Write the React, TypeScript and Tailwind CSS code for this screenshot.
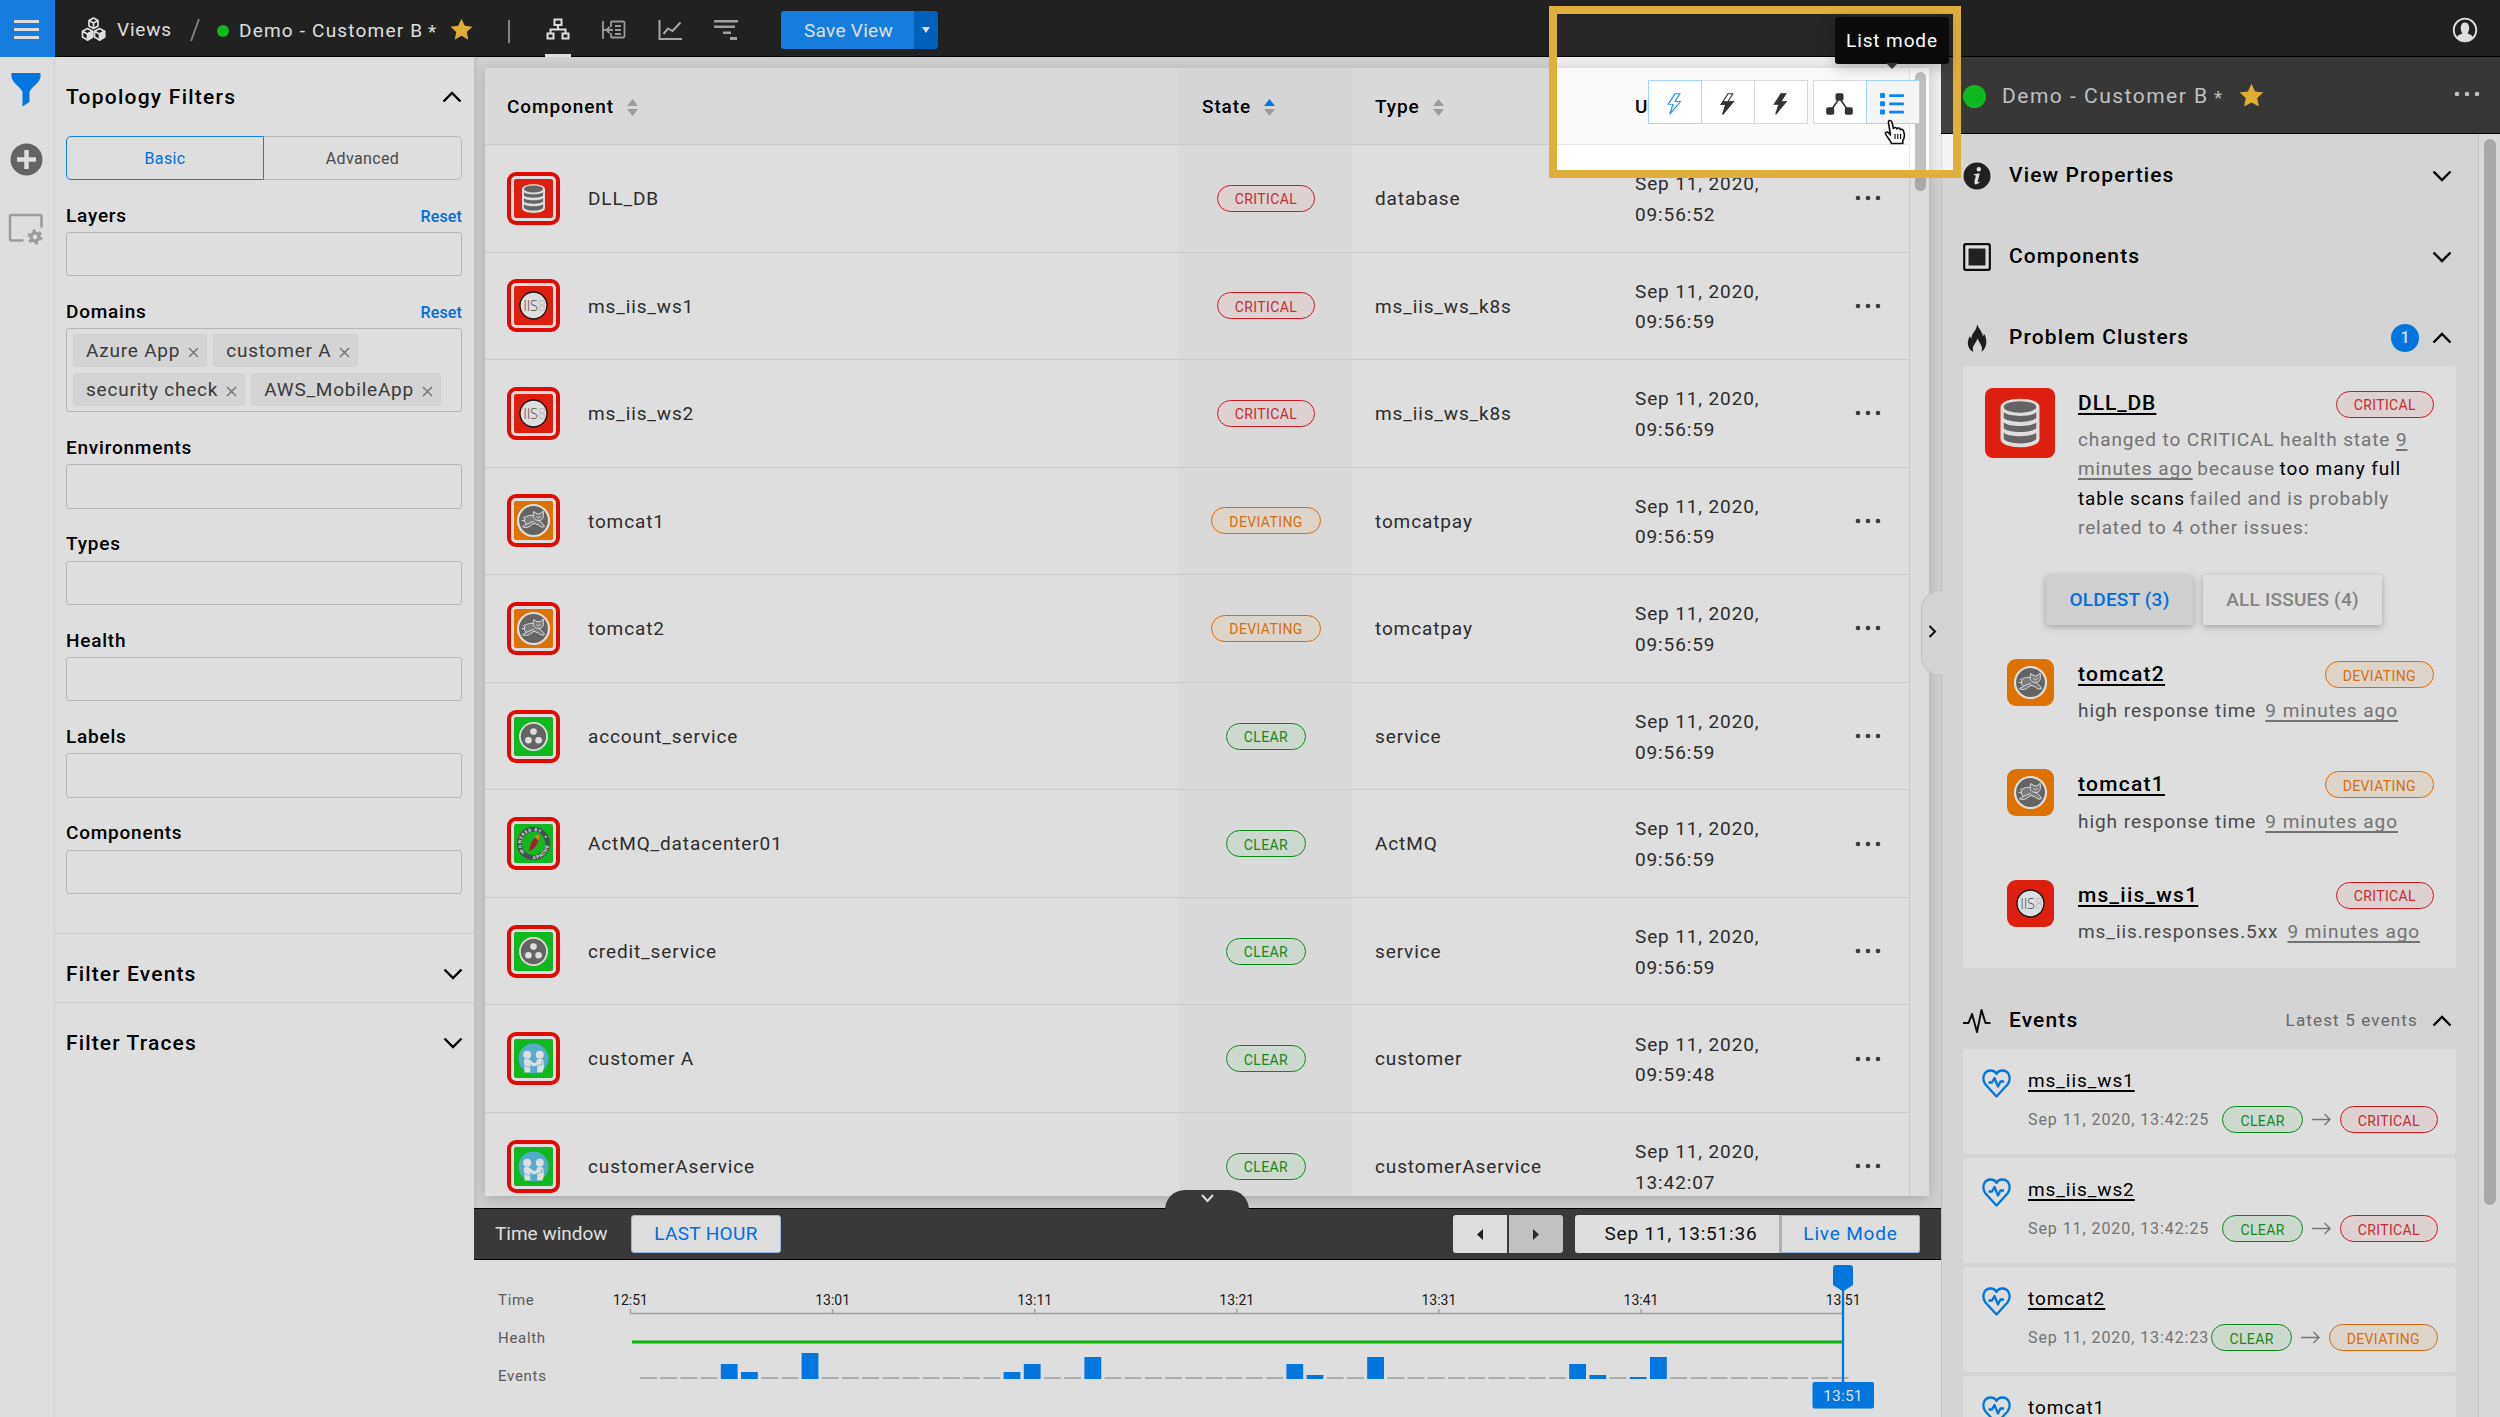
import type { ReactNode } from "react";

type Health = "CRITICAL" | "DEVIATING" | "CLEAR";
type Glyph = "db" | "iis" | "tomcat" | "service" | "apache" | "customer";

const tileColor: Record<Health, string> = {
  CRITICAL: "bg-[#ff2412]",
  DEVIATING: "bg-[#ff8400]",
  CLEAR: "bg-[#12d424]",
};

const pillColor: Record<Health, string> = {
  CRITICAL: "border-[#ee1a28] text-[#e0343c] bg-[#fff0f0]",
  DEVIATING: "border-[#f57c10] text-[#f58010] bg-[#fff5e8]",
  CLEAR: "border-[#0c9c1e] text-[#189c26] bg-[#ecf9ed]",
};

function Pill({ s }: { s: Health }) {
  return (
    <span
      className={`inline-flex h-[27px] shrink-0 items-center rounded-full border-[1.5px] px-[17px] pt-[2px] text-[14px] leading-none tracking-[0.027em] ${pillColor[s]}`}
    >
      {s}
    </span>
  );
}

function GlyphSvg({ g, size }: { g: Glyph; size: number }) {
  return (
    <svg width={size} height={size} viewBox="0 0 39 39" className="block">
      {g === "db" && (
        <g>
          <path d="M8 10C8 3.5 31 3.5 31 10V29C31 35.5 8 35.5 8 29Z" fill="#fff" />
          <ellipse cx="19.5" cy="10" rx="9.6" ry="3.4" fill="#737373" />
          <path d="M9.9 13.2C13 16 26 16 29.100 13.2V16.600C26 19.600 13 19.600 9.900 16.600Z" fill="#737373" />
          <path d="M9.9 19.2C13 22 26 22 29.100 19.2V22.600C26 25.600 13 25.600 9.900 22.600Z" fill="#737373" />
          <path d="M9.9 25.2C13 28 26 28 29.100 25.2V29C26 32.400 13 32.400 9.900 29Z" fill="#737373" />
        </g>
      )}
      {g === "iis" && (
        <g>
          <circle cx="19.500" cy="19.500" r="13.500" fill="#fff" stroke="#151515" strokeWidth="1.300" />
          <text x="9.300" y="24.700" fontFamily="Open Sans" fontWeight="300" fontSize="14.500" letterSpacing="-0.300" fill="#555">
            IIS<tspan fill="#d4d4d4">8</tspan>
          </text>
        </g>
      )}
      {g === "tomcat" && (
        <g strokeLinecap="round" strokeLinejoin="round">
          <circle cx="19.500" cy="19.500" r="15.500" fill="#737373" stroke="#fff" strokeWidth="2.200" />
          <path
            d="M10.500 18.500C11 15.500 14 14 19 14.500L19.800 10.500L23 12.800H26L29.300 10.200V15.500C29 18 27.500 19.500 25 19.500C27 21 29.500 23 30.500 25.500C28.500 26.800 26.500 26 24.500 24L20 22.200L15.500 25.500C13 27 9.500 26.800 8.500 25.500C10 24.500 11.500 24.300 12.500 23.300C10.500 22 10 20.500 10.500 18.500Z"
            fill="#8e8e8e"
            stroke="#fff"
            strokeWidth="1"
          />
          <path d="M19 14.500C19.500 18 21.500 19.500 25 19.500M12.500 23.300C15 22.500 16.500 21 19.500 20.500M22.800 15.500L24.300 17.200L26.500 15.300M9 17L11 15.500M8 19.500H10" fill="none" stroke="#fff" strokeWidth="0.900" />
        </g>
      )}
      {g === "service" && (
        <g>
          <circle cx="19.500" cy="19.500" r="13.600" fill="#737373" stroke="#fff" strokeWidth="1.800" />
          <circle cx="19.500" cy="14.600" r="3.300" fill="#fff" />
          <circle cx="14.400" cy="23.200" r="3.300" fill="#fff" />
          <circle cx="24.600" cy="23.200" r="3.300" fill="#fff" />
        </g>
      )}
      {g === "apache" && (
        <g>
          <circle cx="19.500" cy="19.500" r="14.200" fill="none" stroke="#565a5c" strokeWidth="5" />
          <path id="arcTop" d="M10.730 28.270A12.400 12.400 0 0 1 28.270 10.730" fill="none" />
          <path id="arcLow" d="M8.330 30.670A15.800 15.800 0 0 0 30.670 8.330" fill="none" />
          <text fontFamily="Roboto" fontWeight="700" fontSize="4.300" fill="#fff" textAnchor="middle">
            <textPath href="#arcTop" startOffset="50%">
              POWERED BY
            </textPath>
          </text>
          <text fontFamily="Roboto" fontWeight="700" fontSize="4.800" fill="#fff" textAnchor="middle">
            <textPath href="#arcLow" startOffset="48%">
              APACHE
            </textPath>
          </text>
          <circle cx="31.800" cy="12.800" r="1" fill="#fff" />
          <circle cx="8.700" cy="28.500" r="1" fill="#fff" />
          <path d="M15 27.500C15.500 23 17.500 17.500 20.500 13.200L24.500 16C23.500 20.500 20 25 15 27.500Z" fill="#c41e3a" />
          <path d="M20.500 13.200C21.500 11.700 23.500 10.300 25 10.300C25.500 12.500 25.200 14.300 24.500 16Z" fill="#f69923" />
        </g>
      )}
      {g === "customer" && (
        <g>
          <circle cx="19.500" cy="19.500" r="15" fill="#63c4ea" />
          <circle cx="13.200" cy="15.800" r="4" fill="#fff" />
          <circle cx="25.800" cy="15.800" r="4" fill="#fff" />
          <path d="M9.700 21C11 19.800 15 19.800 16.200 21L20 24.300L22.600 23V21C24 19.800 28 19.800 29.300 21L30 28.500L28.500 33.500H23.200V26.200L19.500 27.400L16.300 25.600V33.500H10.500V27Z" fill="#fff" />
          <path d="M10.800 26.500L16.300 29M23.200 26.500L27.800 25.500V22" fill="none" stroke="#63c4ea" strokeWidth="0.700" />
        </g>
      )}
    </svg>
  );
}

function RingIcon({ g, s }: { g: Glyph; s: Health }) {
  return (
    <div className="flex size-[53px] shrink-0 items-center justify-center rounded-[9px] border-[4px] border-[#ff0e04] bg-white">
      <div className={`size-[39px] overflow-hidden rounded-[2px] ${tileColor[s]}`}>
        <GlyphSvg g={g} size={39} />
      </div>
    </div>
  );
}

function Star({ size }: { size: number }) {
  return (
    <svg width={size} height={size} viewBox="0 0 24 24" fill="#ffc73f" className="block">
      <path d="M12 .8L15.400 8.100L23.400 9.100L17.500 14.500L19.100 22.600L12 18.600L4.900 22.600L6.500 14.500L.6 9.100L8.600 8.100Z" />
    </svg>
  );
}

function Chevron({ up, color = "#000" }: { up?: boolean; color?: string }) {
  return (
    <svg width="20" height="14" viewBox="0 0 20 14" fill="none" stroke={color} strokeWidth="2.400" className="block">
      <path d={up ? "M1.500 11.500L10 3L18.500 11.500" : "M1.500 2.500L10 11L18.500 2.500"} />
    </svg>
  );
}

function Dots({ color = "#444" }: { color?: string }) {
  return (
    <svg width="26" height="6" viewBox="0 0 26 6" fill={color} className="block">
      <circle cx="3" cy="3" r="2.300" />
      <circle cx="13" cy="3" r="2.300" />
      <circle cx="23" cy="3" r="2.300" />
    </svg>
  );
}

function Sort({ asc }: { asc?: boolean }) {
  return (
    <svg width="11" height="17" viewBox="0 0 11 17" className="ml-[13px] mt-[1px] block">
      <path d="M5.500 0L11 7H0Z" fill={asc ? "#0a84ff" : "#b4b4b4"} />
      <path d="M5.500 17L11 10H0Z" fill="#b4b4b4" />
    </svg>
  );
}

function TopBar() {
  return (
    <header className="flex h-[57px] shrink-0 items-center border-b border-black bg-[#262626] text-[19px] text-white">
      <div className="flex h-[57px] w-[55px] flex-col items-center justify-center gap-[5px] bg-[#1890ff] pr-[2px] pt-[2px]">
        <div className="h-[3px] w-[25px] bg-white" />
        <div className="h-[3px] w-[25px] bg-white" />
        <div className="h-[3px] w-[25px] bg-white" />
      </div>
      <svg width="25" height="24" viewBox="0 0 25 24" className="ml-[26px] mt-[1px] block" fill="#262626" stroke="#fff" strokeWidth="1.700" strokeLinejoin="round">
        <path d="M12.500 1L17 3.500V9L12.500 11.500L8 9V3.500ZM8 3.500L12.500 6L17 3.500M12.500 6V11.500" />
        <path d="M6.500 11.500L11.500 14.200V20L6.500 23L1.500 20V14.200ZM1.500 14.200L6.500 17L11.500 14.200" />
        <path d="M6.500 17L11.500 14.200V20L6.500 23Z" fill="#fff" />
        <path d="M18.500 11.500L23.500 14.200V20L18.500 23L13.500 20V14.200ZM13.500 14.200L18.500 17L23.500 14.200" />
        <path d="M18.500 17L23.500 14.200V20L18.500 23Z" fill="#fff" />
      </svg>
      <span className="ml-[11px] mt-[4px] w-[56px] tracking-[0.042em]">Views</span>
      <svg width="10" height="22" viewBox="0 0 10 22" className="ml-[17px] mt-[4px] block" stroke="#999" strokeWidth="1.800">
        <path d="M9 0L1 22" />
      </svg>
      <div className="ml-[17px] mt-[5px] size-[12px] rounded-full bg-[#12d424]" />
      <span className="ml-[10px] mt-[7px] w-[189px] whitespace-nowrap tracking-[0.063em]">Demo - Customer B</span>
      <span className="mt-[9px] w-[10px]">*</span>
      <div className="ml-[12px] mt-[3px]">
        <Star size={23} />
      </div>
      <div className="ml-[35px] mt-[6px] h-[23px] w-[2px] bg-[#999]" />
      <div className="relative ml-[35px] flex h-[57px] w-[25px] items-center justify-center">
        <svg width="24" height="22" viewBox="0 0 24 22" fill="none" stroke="#fff" strokeWidth="2" className="mt-[2px] block">
          <path d="M8.500 1.500H15.500V7H8.500ZM1.500 15.500H7.500V20.500H1.500ZM16.500 15.500H22.500V20.500H16.500ZM12 7V11.500M4.500 15.500V11.500H19.500V15.500" />
        </svg>
        <div className="absolute bottom-0 left-0 h-[3px] w-[26px] bg-white" />
      </div>
      <svg width="24" height="20" viewBox="0 0 24 20" fill="none" stroke="#b0b0b0" strokeWidth="1.800" className="ml-[32px] mt-[3px] block">
        <path d="M9 7V2Q9 1.500 9.500 1.500H21.500Q22.500 1.500 22.500 2.500V16Q22.500 17.500 21.500 17.500H9.500Q9 17.500 9 16.500V13M1 1V19M1 10H11M7.500 7L4.500 10L7.500 13M13 6H19M13 10H19M13 14H19" />
      </svg>
      <svg width="25" height="22" viewBox="0 0 25 22" fill="none" stroke="#c0c0c0" strokeWidth="2" className="ml-[32px] mt-[3px] block">
        <path d="M1.500 1V20H24M5.500 15L10 9.500L14.500 12L22.500 3.500" />
      </svg>
      <svg width="24" height="22" viewBox="0 0 24 22" fill="#b8b8b8" className="ml-[31px] mt-[3px] block">
        <path d="M0 1H24V3.500H0ZM0 6.500H21V9H0ZM9 12.500H17V15H9ZM16 18H23V21H16Z" />
      </svg>
      <div className="ml-[43px] mt-[4px] flex h-[38px] w-[157px] overflow-hidden rounded-[3px]">
        <div className="flex w-[133px] items-center justify-center bg-[#1890ff] pl-[2px] pt-[2px] tracking-[0.016em]">Save View</div>
        <div className="flex w-[24px] items-center justify-center bg-[#0070d8]">
          <svg width="8" height="6" viewBox="0 0 8 6" fill="#fff">
            <path d="M0 0H8L4 6Z" />
          </svg>
        </div>
      </div>
      <svg width="26" height="26" viewBox="0 0 26 26" className="ml-auto mr-[22px] mt-[3px] block">
        <circle cx="13" cy="13" r="11.300" fill="#262626" stroke="#fff" strokeWidth="1.800" />
        <path d="M5 20.500C6 17.500 9 17.200 10.500 16.500C8 14 7.800 5.500 13 5.500C18.200 5.500 18 14 15.500 16.500C17 17.200 20 17.500 21 20.500C17 25.200 9 25.200 5 20.500Z" fill="#fff" />
      </svg>
    </header>
  );
}

function IconRail() {
  return (
    <div className="flex w-[55px] shrink-0 flex-col items-center border-r border-[#efefef] bg-white pr-[2px] pt-[16px]">
      <svg width="30" height="34" viewBox="0 0 30 34" fill="#0088ff" className="block">
        <path d="M.5 0H29.500V4.500C27 12 21 13 18.500 19V29L11.500 33.500V19C9 13 3 12 .5 4.500Z" />
      </svg>
      <svg width="33" height="33" viewBox="0 0 33 33" className="mt-[36px] block">
        <circle cx="16.500" cy="16.500" r="16" fill="#737373" />
        <path d="M16.500 7V26M7 16.500H26" stroke="#fff" strokeWidth="4.500" />
      </svg>
      <svg width="36" height="32" viewBox="0 0 36 32" className="mt-[37px] block" fill="none" stroke="#b4b4b4">
        <path d="M15.500 27.500H4Q2 27.500 2 25.500V4Q2 2 4 2H31.500Q33.500 2 33.500 4V14.500" strokeWidth="2.600" />
        <circle cx="27" cy="24" r="4" strokeWidth="3.200" />
        <circle cx="27" cy="24" r="6.300" strokeWidth="2.400" strokeDasharray="3.300 3.300" />
      </svg>
    </div>
  );
}

function Tag({ children }: { children: ReactNode }) {
  return (
    <div className="flex h-[33px] items-center rounded-[3px] border border-[#efefef] bg-[#f4f4f4] pl-[12px] pr-[7px] pt-[1px] text-[19px] tracking-[0.041em] text-[#444]">
      {children}
      <svg width="11" height="11" viewBox="0 0 11 11" stroke="#808080" strokeWidth="1.400" className="ml-[8px] mt-[2px] block">
        <path d="M1 1L10 10M10 1L1 10" />
      </svg>
    </div>
  );
}

function Field({ label, reset, children }: { label: string; reset?: boolean; children?: ReactNode }) {
  return (
    <div className="mb-[20px]">
      <div className="flex h-[32px] items-center justify-between">
        <span className="text-[19px] font-medium tracking-[0.041em]">{label}</span>
        {reset && <span className="mt-[2px] text-[16px] font-medium tracking-[0.008em] text-[#0080ff]">Reset</span>}
      </div>
      <div className="flex min-h-[44.350px] flex-wrap gap-[6px] rounded-[3px] border-[1.500px] border-[#d2d2d2] py-[5px] pl-[6px]">{children}</div>
    </div>
  );
}

function FilterPanel() {
  return (
    <aside className="flex w-[419px] shrink-0 flex-col bg-white">
      <div className="pl-[11px] pr-[12px] pt-[14px]">
        <div className="flex h-[52px] items-center justify-between">
          <span className="pt-[2px] text-[21px] font-medium tracking-[0.059em]">Topology Filters</span>
          <Chevron up />
        </div>
        <div className="mt-[13px] grid h-[44px] grid-cols-2 text-[16px] tracking-[0.022em]">
          <div className="flex items-center justify-center rounded-l-[5px] border-[1.500px] border-[#1890ff] pt-[2px] text-[#0080ff]">Basic</div>
          <div className="flex items-center justify-center rounded-r-[5px] border-[1.500px] border-l-0 border-[#d4d4d4] pt-[2px] text-[#555]">Advanced</div>
        </div>
        <div className="mt-[20px]">
          <Field label="Layers" reset />
          <Field label="Domains" reset>
            <Tag>Azure App</Tag>
            <Tag>customer A</Tag>
            <Tag>security check</Tag>
            <Tag>AWS_MobileApp</Tag>
          </Field>
          <Field label="Environments" />
          <Field label="Types" />
          <Field label="Health" />
          <Field label="Labels" />
          <Field label="Components" />
        </div>
      </div>
      <div className="mt-[19px] flex h-[69px] items-center justify-between border-t border-[#ececec] px-[11px] pt-[12px] text-[21px] font-medium tracking-[0.054em]">
        <span className="pt-[2px]">Filter Events</span>
        <Chevron />
      </div>
      <div className="flex h-[69px] items-center justify-between border-t border-[#ececec] px-[11px] pt-[12px] text-[21px] font-medium tracking-[0.054em]">
        <span className="pt-[2px]">Filter Traces</span>
        <Chevron />
      </div>
    </aside>
  );
}

const rows: { g: Glyph; name: string; s: Health; type: string; time: string }[] = [
  { g: "db", name: "DLL_DB", s: "CRITICAL", type: "database", time: "09:56:52" },
  { g: "iis", name: "ms_iis_ws1", s: "CRITICAL", type: "ms_iis_ws_k8s", time: "09:56:59" },
  { g: "iis", name: "ms_iis_ws2", s: "CRITICAL", type: "ms_iis_ws_k8s", time: "09:56:59" },
  { g: "tomcat", name: "tomcat1", s: "DEVIATING", type: "tomcatpay", time: "09:56:59" },
  { g: "tomcat", name: "tomcat2", s: "DEVIATING", type: "tomcatpay", time: "09:56:59" },
  { g: "service", name: "account_service", s: "CLEAR", type: "service", time: "09:56:59" },
  { g: "apache", name: "ActMQ_datacenter01", s: "CLEAR", type: "ActMQ", time: "09:56:59" },
  { g: "service", name: "credit_service", s: "CLEAR", type: "service", time: "09:56:59" },
  { g: "customer", name: "customer A", s: "CLEAR", type: "customer", time: "09:59:48" },
  { g: "customer", name: "customerAservice", s: "CLEAR", type: "customerAservice", time: "13:42:07" },
];

function ComponentTable() {
  return (
    <div className="flex h-[1128px] w-[1444px] overflow-hidden bg-white shadow-[0_3px_14px_rgba(0,0,0,0.2)]">
      <div className="w-[1425px] shrink-0 border-r border-[#e6e6e6]">
        <div className="grid h-[77px] grid-cols-[694px_173px_260px_1fr] border-b border-[#e8e8e8] bg-[#fafafa] text-[19px] font-medium tracking-[0.047em]">
          <div className="flex items-center pl-[22px] pt-[2px]">
            Component
            <Sort />
          </div>
          <div className="flex items-center bg-[#f5f5f5] pl-[23px] pt-[2px]">
            State
            <Sort asc />
          </div>
          <div className="flex items-center pl-[23px] pt-[2px]">
            Type
            <Sort />
          </div>
          <div className="flex items-center pl-[23px] pt-[2px]">U</div>
        </div>
        {rows.map((r) => (
          <div
            key={r.name}
            className="grid h-[107.550px] grid-cols-[694px_173px_260px_1fr] border-b border-[#e8e8e8] text-[19px] tracking-[0.046em] text-[#333]"
          >
            <div className="flex items-center pl-[22px]">
              <RingIcon g={r.g} s={r.s} />
              <span className="ml-[28px] pt-[2px]">{r.name}</span>
            </div>
            <div className="flex items-center justify-center bg-[#fafafa] pl-px">
              <Pill s={r.s} />
            </div>
            <div className="flex items-center pl-[23px] pt-[2px]">{r.type}</div>
            <div className="flex items-center justify-between pl-[23px] pr-[28px]">
              <span className="w-[150px] pt-[3px] leading-[30.600px]">
                Sep 11, 2020,
                <br />
                {r.time}
              </span>
              <Dots />
            </div>
          </div>
        ))}
      </div>
      <div className="flex w-[19px] justify-center bg-[#fcfcfc] pl-[2px] pt-[4px]">
        <div className="h-[119px] w-[11px] rounded-full bg-[#c1c1c1]" />
      </div>
    </div>
  );
}

const bolt = "M8.500 1L2 15.500H6.500L3.500 29L13.500 11.500H8.500L13 1Z";

function ToolButtons() {
  return (
    <div className="absolute left-[1173.500px] top-[23px] flex">
      <div className="flex">
        <div className="z-10 flex h-[44px] w-[54px] items-center justify-center border-[1.500px] border-[#a4d5ff] bg-white pr-[2px] pt-[3px]">
          <svg width="16" height="22" viewBox="0 0 15 30" preserveAspectRatio="none" fill="none" stroke="#2b92ff" strokeWidth="1.300">
            <path d={bolt} />
          </svg>
        </div>
        <div className="-ml-px flex h-[44px] w-[54px] items-center justify-center border-[1.500px] border-[#d9d9d9] bg-white pr-[2px] pt-[3px]">
          <svg width="16" height="22" viewBox="0 0 15 30" preserveAspectRatio="none" stroke="#333" strokeWidth="1.100">
            <path d={bolt} fill="none" />
            <path d="M2 15.500H6.500L3.500 29L13.500 11.500H4Z" fill="#333" />
          </svg>
        </div>
        <div className="-ml-px flex h-[44px] w-[54px] items-center justify-center border-[1.500px] border-[#d9d9d9] bg-white pr-[2px] pt-[3px]">
          <svg width="16" height="22" viewBox="0 0 15 30" preserveAspectRatio="none" stroke="#333" strokeWidth="1.100" fill="#333">
            <path d={bolt} />
          </svg>
        </div>
      </div>
      <div className="ml-[5px] flex">
        <div className="flex h-[44px] w-[54px] items-center justify-center border-[1.500px] border-[#d9d9d9] bg-white pr-px pt-[3px]">
          <svg width="27" height="22" viewBox="0 0 27 22" fill="#333" stroke="#333" strokeWidth="1.600">
            <path d="M13.500 5L5 17.500M13.500 5L22 17.500" />
            <rect x="10.300" y="1" width="6.400" height="6" rx="1" />
            <rect x="1" y="15" width="6.400" height="6" rx="1" />
            <rect x="19.600" y="15" width="6.400" height="6" rx="1" />
          </svg>
        </div>
        <div className="-ml-px flex h-[44px] w-[54px] items-center justify-center border-[1.500px] border-[#a4d5ff] bg-[#f5f5f5] pr-px pt-[3px]">
          <svg width="24" height="22" viewBox="0 0 24 22" fill="#0a84ff">
            <rect x="0" y="0" width="5" height="5" rx="1" />
            <rect x="0" y="8.300" width="5" height="5" rx="1" />
            <rect x="0" y="16.600" width="5" height="5" rx="1" />
            <rect x="9" y="1.200" width="15" height="2.800" rx="1" />
            <rect x="9" y="9.500" width="15" height="2.800" rx="1" />
            <rect x="9" y="17.800" width="15" height="2.800" rx="1" />
          </svg>
        </div>
      </div>
    </div>
  );
}

function TimeBar() {
  return (
    <div className="relative flex h-[52px] shrink-0 items-center border-y border-black bg-[#424242] pl-[21px] pr-[21px] text-[19px] text-white">
      <div className="absolute left-[691px] top-[-19px] flex h-[20px] w-[84px] justify-center rounded-t-[20px] bg-[#424242] pt-[4px]">
        <svg width="13" height="9" viewBox="0 0 13 9" fill="none" stroke="#fff" strokeWidth="2">
          <path d="M1 1L6.500 7L12 1" />
        </svg>
      </div>
      <span className="w-[136px] pt-[1px]">Time window</span>
      <div className="flex h-[38px] w-[150px] items-center justify-center rounded-[3px] border border-[#a8d4ff] bg-white pt-[1px] tracking-[0.018em] text-[#0080ff]">LAST HOUR</div>
      <div className="ml-auto flex gap-[2px]">
        <div className="flex h-[38px] w-[54px] items-center justify-center rounded-l-[3px] bg-white">
          <svg width="6" height="11" viewBox="0 0 6 11" fill="#222">
            <path d="M6 0V11L0 5.500Z" />
          </svg>
        </div>
        <div className="flex h-[38px] w-[54px] items-center justify-center rounded-r-[3px] bg-[#dedede]">
          <svg width="6" height="11" viewBox="0 0 6 11" fill="#333">
            <path d="M0 0V11L6 5.500Z" />
          </svg>
        </div>
      </div>
      <div className="ml-[12px] flex h-[38px] overflow-hidden rounded-[3px] bg-white">
        <div className="flex w-[206px] items-center justify-center border-r-2 border-[#ccc] pl-[8px] pt-[1px] tracking-[0.044em] text-[#111]">Sep 11, 13:51:36</div>
        <div className="flex w-[139px] items-center justify-center rounded-r-[3px] border border-[#a8d4ff] pt-[1px] tracking-[0.043em] text-[#0080ff]">Live Mode</div>
      </div>
    </div>
  );
}

const spikes: Record<number, number> = { 4: 15, 5: 7, 8: 26, 18: 7, 19: 15, 22: 22, 32: 15, 33: 4, 36: 22, 46: 15, 47: 4, 49: 2, 50: 22 };
const ticks = ["12:51", "13:01", "13:11", "13:21", "13:31", "13:41", "13:51"];

function Timeline() {
  return (
    <svg width="1467" height="157" viewBox="0 0 1467 157" className="block bg-white" fontFamily="Roboto">
      <g fontSize="15" letterSpacing="0.700" fill="#6a6a6a">
        <text x="24" y="45">Time</text>
        <text x="24" y="83">Health</text>
        <text x="24" y="120.500">Events</text>
      </g>
      {ticks.map((t, i) => (
        <g key={t}>
          <text x={156.500 + i * 202.100} y="44.500" fontSize="14" textAnchor="middle" fill="#222">
            {t}
          </text>
          <path d={`M${156.500 + i * 202.100} 49V53`} stroke="#bbb" strokeWidth="1.500" />
        </g>
      ))}
      <path d="M156 53.500H1369" stroke="#bbb" strokeWidth="1.500" />
      <path d="M158 82H1369" stroke="#06d010" strokeWidth="3" />
      {Array.from({ length: 60 }, (_, i) => {
        const h = spikes[i] ?? 2;
        return <rect key={i} x={166 + i * 20.200} y={119 - h} width="16.800" height={h} fill={spikes[i] ? "#0088ff" : "#c8c8c8"} />;
      })}
      <path d="M1369 30V123" stroke="#0088ff" strokeWidth="2.300" />
      <path d="M1359 8Q1359 5 1362 5H1376Q1379 5 1379 8V25L1369 31.500L1359 25Z" fill="#0088ff" />
      <rect x="1338.500" y="122" width="61.500" height="26.500" rx="2" fill="#0088ff" />
      <text x="1369" y="141" fontSize="15.500" letterSpacing="0.200" textAnchor="middle" fill="#fff">
        13:51
      </text>
    </svg>
  );
}

function Section({ icon, title, y, children }: { icon: ReactNode; title: string; y: string; children: ReactNode }) {
  return (
    <div className={`flex shrink-0 items-center pl-[21px] pr-[26px] ${y}`}>
      <div className="flex w-[28px] justify-start">{icon}</div>
      <span className="ml-[18px] text-[21px] font-medium tracking-[0.053em]">{title}</span>
      <div className="ml-auto flex items-center">{children}</div>
    </div>
  );
}

const issues: { g: Glyph; name: string; s: Health; text: string }[] = [
  { g: "tomcat", name: "tomcat2", s: "DEVIATING", text: "high response time" },
  { g: "tomcat", name: "tomcat1", s: "DEVIATING", text: "high response time" },
  { g: "iis", name: "ms_iis_ws1", s: "CRITICAL", text: "ms_iis.responses.5xx" },
];

const events: { name: string; time: string; s: Health }[] = [
  { name: "ms_iis_ws1", time: "13:42:25", s: "CRITICAL" },
  { name: "ms_iis_ws2", time: "13:42:25", s: "CRITICAL" },
  { name: "tomcat2", time: "13:42:23", s: "DEVIATING" },
  { name: "tomcat1", time: "13:42:23", s: "DEVIATING" },
];

const link = "underline decoration-[1.500px] underline-offset-[3px] [text-decoration-skip-ink:none]";

function DetailsPanel() {
  return (
    <aside className="relative flex w-[559px] shrink-0 flex-col bg-[#f4f4f4]">
      <div className="absolute left-[-20px] top-[533px] flex h-[86px] w-[22px] items-center rounded-l-[20px] border-[1.500px] border-r-0 border-[#ddd] bg-[#f4f4f4] pb-[3px] pl-[6px]">
        <svg width="9" height="13" viewBox="0 0 9 13" fill="none" stroke="#111" strokeWidth="2">
          <path d="M1.500 1L7 6.500L1.500 12" />
        </svg>
      </div>
      <div className="flex h-[77px] shrink-0 items-center border-b border-black bg-[#404040] pl-[22px] pr-[20px] text-[21px] text-[#ddd]">
        <div className="mt-[2px] size-[23px] rounded-full bg-[#12d424]" />
        <span className="ml-[16px] mt-[3px] w-[212px] whitespace-nowrap tracking-[0.071em]">Demo - Customer B</span>
        <span className="mt-[6px] w-[10px] text-[19px]">*</span>
        <div className="ml-[15px]">
          <Star size={25} />
        </div>
        <div className="-mt-[2px] ml-auto">
          <Dots color="#ddd" />
        </div>
      </div>
      <div className="flex min-h-0 flex-1">
        <div className="flex w-[538px] shrink-0 flex-col overflow-hidden border-l-[1.500px] border-r border-l-[#dadada] border-r-[#e0e0e0]">
          <Section
            title="View Properties"
            y="mt-[1px] h-[81px]"
            icon={
              <svg width="28" height="28" viewBox="0 0 28 28">
                <circle cx="14" cy="14" r="13.500" fill="#262626" />
                <circle cx="15.800" cy="7.300" r="2.200" fill="#fff" />
                <path d="M10.800 12.200L16.800 11.300L14.700 19.600Q14.600 20.800 16.500 19.400L17 20Q14 23 12.200 22.300Q10.900 21.600 11.500 19.300L12.900 13.600L10.700 13.100Z" fill="#fff" />
              </svg>
            }
          >
            <Chevron />
          </Section>
          <Section
            title="Components"
            y="h-[81px]"
            icon={
              <svg width="28" height="28" viewBox="0 0 28 28">
                <rect x="1.200" y="1.200" width="25.600" height="25.600" rx="1.500" fill="#fff" stroke="#111" strokeWidth="2.200" />
                <rect x="5.500" y="5.500" width="17" height="17" fill="#262626" />
              </svg>
            }
          >
            <Chevron />
          </Section>
          <Section
            title="Problem Clusters"
            y="h-[69px] pb-[1px] pt-[23px] -mt-[5px]"
            icon={
              <svg width="28" height="28" viewBox="0 0 28 28" fill="#222">
                <path d="M14 0C16 5 19.500 8 19.800 12.500Q21 11.500 20.800 9.500C24.500 14 24.500 24 18.500 28C20.300 22 17 20.500 14.500 14.500C13 19.500 8 22 10.500 28C4 25 3.500 17 7 12Q7.500 14 8.500 14.500C8.300 9 14.500 6 14 0Z" />
              </svg>
            }
          >
            <div className="mr-[13px] flex size-[28px] items-center justify-center rounded-full bg-[#0088ff] text-[16px] font-medium text-white">1</div>
            <Chevron up />
          </Section>
          <div className="ml-[21px] mt-[5px] h-[602px] w-[493px] shrink-0 rounded-[4px] bg-white pl-[22px] pr-[22px] pt-[22px]">
            <div className="flex">
              <div className="flex size-[70px] shrink-0 items-center justify-center rounded-[8px] bg-[#ff2412]">
                <GlyphSvg g="db" size={66} />
              </div>
              <div className="ml-[23px] flex-1">
                <div className="flex h-[32px] items-center justify-between">
                  <span className={`text-[21px] font-medium tracking-[0.044em] ${link}`}>DLL_DB</span>
                  <Pill s="CRITICAL" />
                </div>
                <p className="mt-[5px] w-[354px] whitespace-nowrap text-[19px] leading-[29.300px] tracking-[0.047em] text-[#858585]">
                  changed to CRITICAL health state <span className={link}>9</span>
                  <br />
                  <span className={link}>minutes ago</span> <span className="-ml-[1px]">because</span> <span className="-ml-[1px] text-black">too many full</span>
                  <br />
                  <span className="text-black">table scans</span> <span className="-ml-[1px]">failed and is probably</span>
                  <br />
                  related to 4 other issues:
                </p>
              </div>
            </div>
            <div className="ml-[61px] mt-[33px] flex gap-[10px] text-[19px] font-medium tracking-[0.011em]">
              <div className="flex h-[50px] w-[147px] items-center justify-center rounded-[3px] bg-[#eee] text-[#0080ff] shadow-[0_2px_7px_rgba(0,0,0,0.28)]">OLDEST (3)</div>
              <div className="flex h-[50px] w-[179px] items-center justify-center rounded-[3px] bg-white text-[#979797] shadow-[0_2px_7px_rgba(0,0,0,0.28)]">ALL ISSUES (4)</div>
            </div>
            <div className="mt-[34px]">
              {issues.map((it) => (
                <div key={it.name} className="flex h-[110.300px] pl-[22px]">
                  <div className={`flex size-[47px] shrink-0 items-center justify-center rounded-[9px] ${tileColor[it.s]}`}>
                    <GlyphSvg g={it.g} size={39} />
                  </div>
                  <div className="ml-[24px] flex-1">
                    <div className="flex h-[31px] items-center justify-between">
                      <span className={`text-[21px] font-medium tracking-[0.060em] ${link}`}>{it.name}</span>
                      <Pill s={it.s} />
                    </div>
                    <div className="mt-[6px] flex h-[31px] items-center gap-[9px] whitespace-nowrap text-[19px] tracking-[0.050em]">
                      <span className="text-[#555]">{it.text}</span>
                      <span className={`text-[#858585] ${link}`}>9 minutes ago</span>
                    </div>
                  </div>
                </div>
              ))}
            </div>
          </div>
          <Section
            title="Events"
            y="h-[81px] pt-[25px]"
            icon={
              <svg width="28" height="28" viewBox="0 0 28 28" fill="none" stroke="#111" strokeWidth="2" strokeLinejoin="round">
                <path d="M0 16H5.500L9 7L14 25L18.500 3L22.500 16H27.500" />
              </svg>
            }
          >
            <span className="mr-[14px] text-[17px] tracking-[0.068em] text-[#777]">Latest 5 events</span>
            <Chevron up />
          </Section>
          <div className="ml-[21px] flex w-[493px] flex-col gap-[4.500px]">
            {events.map((e) => (
              <div key={e.name} className="flex h-[104.500px] shrink-0 rounded-[4px] bg-white pl-[19px] pr-[18px] pt-[18px]">
                <svg width="29" height="30" viewBox="0 0 29 30" fill="none" stroke="#0088ff" strokeWidth="2.300" strokeLinejoin="round" className="mt-[1px] block">
                  <path d="M14.500 28.500L3.500 16.500C-.5 11 1.500 3 8 2.500C11 2.300 13.500 4 14.500 6C15.500 4 18 2.300 21 2.500C27.500 3 29.500 11 25.500 16.500Z" />
                  <path d="M6.500 14.500H10L12.500 10L16 18.500L18.500 13.500H22" />
                </svg>
                <div className="ml-[17px] flex-1">
                  <div className="flex h-[28px] items-center text-[19px] tracking-[0.049em]">
                    <span className={link}>{e.name}</span>
                  </div>
                  <div className="mt-[11px] flex h-[27px] items-center whitespace-nowrap">
                    <span className="w-0 text-[16px] tracking-[0.058em] text-[#858585]">Sep 11, 2020, {e.time}</span>
                    <div className="ml-auto flex items-center">
                      <Pill s="CLEAR" />
                      <svg width="19" height="13" viewBox="0 0 19 13" fill="none" stroke="#888" strokeWidth="1.400" className="mx-[9px]">
                        <path d="M0 6.500H18M12.500 1L18 6.500L12.500 12" />
                      </svg>
                      <Pill s={e.s} />
                    </div>
                  </div>
                </div>
              </div>
            ))}
          </div>
        </div>
        <div className="flex w-[21px] bg-[#fafafa] pl-[5px] pt-[5px]">
          <div className="h-[1066px] w-[12px] rounded-full bg-[#c1c1c1]" />
        </div>
      </div>
    </aside>
  );
}

export default function App() {
  return (
    <div className="relative flex h-[1417px] w-[2500px] flex-col overflow-hidden bg-white font-['Roboto',sans-serif] text-black">
      <TopBar />
      <div className="flex min-h-0 flex-1">
        <IconRail />
        <FilterPanel />
        <main className="relative flex w-[1467px] shrink-0 flex-col">
          <div className="h-[1151px] shrink-0 overflow-hidden bg-[#f0f0f0] pl-[11px] pt-[11px] shadow-[inset_6px_0_6px_-5px_rgba(0,0,0,0.12)]">
            <ComponentTable />
          </div>
          <TimeBar />
          <Timeline />
          <ToolButtons />
        </main>
        <DetailsPanel />
      </div>
      <div className="absolute left-[1549px] top-[6px] h-[172px] w-[412px] border-[8px] border-[#dfaf3b] shadow-[0_0_0_3000px_rgba(0,0,0,0.13)]" />
      <div className="absolute left-[1835px] top-[17px] flex h-[47px] w-[114px] items-center justify-center rounded-[3px] bg-[#0a0a0a] pt-[1px] text-[19px] tracking-[0.047em] text-white shadow-[0_3px_16px_rgba(0,0,0,0.25)]">
        List mode
        <svg width="12" height="6" viewBox="0 0 12 6" className="absolute left-[51px] top-[46px]" fill="#333">
          <path d="M0 0H12L6 6Z" />
        </svg>
      </div>
      <svg width="24" height="26" viewBox="0 0 24 26" className="absolute left-[1884px] top-[119px]" fill="#fff" stroke="#111" strokeWidth="1.600" strokeLinejoin="round">
        <path d="M7.500 24.500C6.500 21.500 2.500 17.500 1.500 14.800C1 13 3.500 12.500 4.800 14L6.500 16L4.500 4C4.200 1 7.300 .7 8 3.500L9.500 9.500C10 8 12.700 8.200 12.900 10C13.500 8.500 16.200 8.800 16.300 10.800C17.200 9.800 19.500 10.500 19.600 12.500C21 16 20.500 19 18.800 21.500V24.500Z" />
        <path d="M11 15V20M13.800 15V20M16.600 15V20" strokeWidth="1.200" />
      </svg>
    </div>
  );
}
